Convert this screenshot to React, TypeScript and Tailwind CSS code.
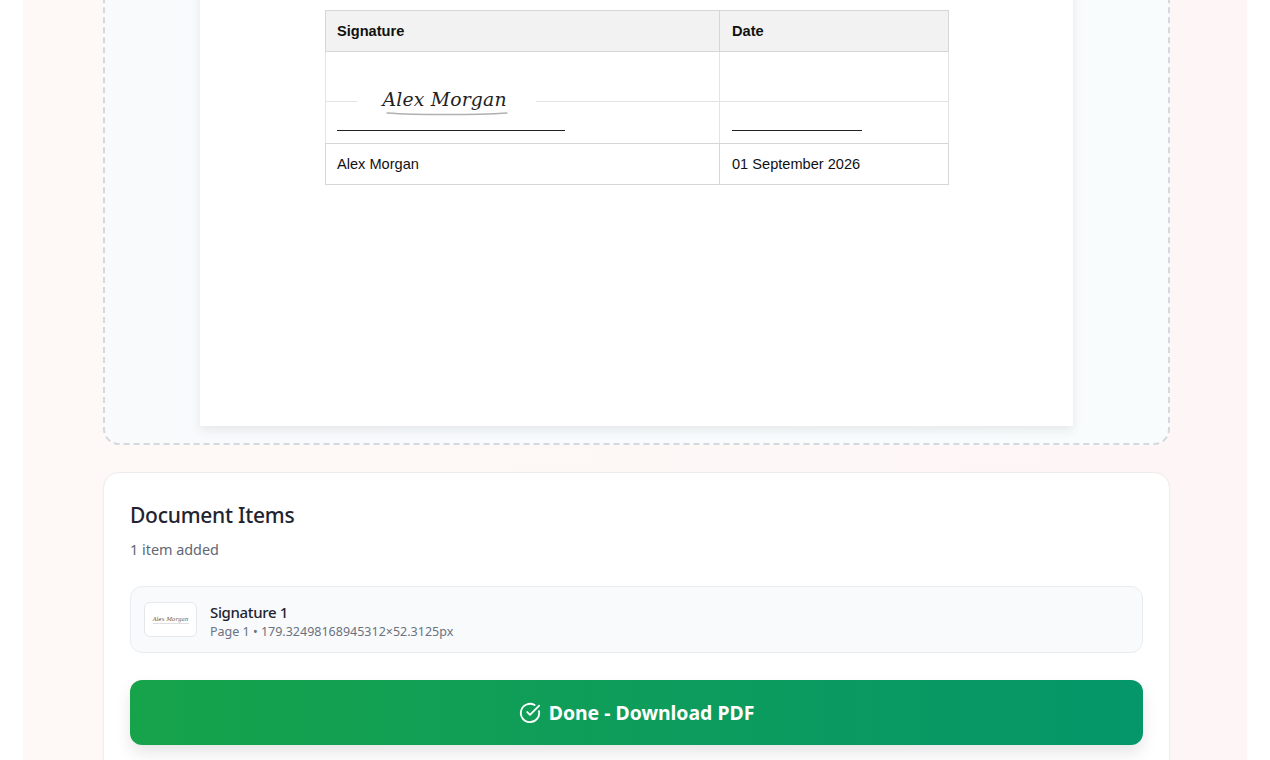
import React from 'react';

const ui = { fontFamily: '"Noto Sans", "Open Sans", sans-serif' };

const App = () => {
    return (
        <div className="h-[760px] overflow-hidden bg-white" style={ui}>
            <div className="mx-auto h-full w-[1224px] overflow-hidden bg-gradient-to-r from-[#fef9f6] via-[#fdf7f6] to-[#fef6f6] pr-[77px] pl-20">

                {/* Drop zone with the PDF page */}
                <div className="-mt-[40px] flex justify-center rounded-2xl border-2 border-dashed border-[#d5d8dd] bg-gradient-to-r from-[#f8fafc] to-[#f8fcfd] pt-[17px] pb-[17px]">
                    <div className="relative h-[447px] w-[873px] shrink-0 bg-white pt-[31px] pl-[125px] shadow-[0_4px_10px_rgba(0,0,0,0.08)]">
                        <table className="w-[624px] table-fixed border-collapse font-['Liberation_Sans',Arial,sans-serif] text-[14.6px] text-[#111]">
                            <tbody>
                                <tr className="h-[41px] bg-[#f2f2f2] font-bold">
                                    <td className="w-[394px] border border-[#d6d6d6] pt-[2px] pr-3 pl-[11px]">Signature</td>
                                    <td className="border border-[#d6d6d6] px-3 pt-[2px]">Date</td>
                                </tr>
                                <tr className="h-[50px]">
                                    <td className="border border-[#e3e3e3]"></td>
                                    <td className="border border-[#e3e3e3]"></td>
                                </tr>
                                <tr className="h-[42px]">
                                    <td className="border border-[#e3e3e3] border-b-[#d6d6d6] pr-3 pl-[11px] align-bottom">
                                        <div className="mb-3 h-px w-[228px] bg-[#222]"></div>
                                    </td>
                                    <td className="border border-[#e3e3e3] border-b-[#d6d6d6] px-3 align-bottom">
                                        <div className="mb-3 h-px w-[130px] bg-[#222]"></div>
                                    </td>
                                </tr>
                                <tr className="h-[41px]">
                                    <td className="border border-[#d6d6d6] pt-px pr-3 pl-[11px]">Alex Morgan</td>
                                    <td className="border border-[#d6d6d6] px-3 pt-px">01 September 2026</td>
                                </tr>
                            </tbody>
                        </table>

                        {/* Placed signature */}
                        <div className="absolute top-[96px] left-[157px] h-[52px] w-[179px] bg-white">
                            <div className="absolute top-[13px] left-[25.5px] font-['DejaVu_Serif',serif] text-[18.8px] leading-6 tracking-[0.2px] whitespace-nowrap text-[#222] italic">
                                Alex Morgan
                            </div>
                            <svg className="absolute top-[37px] left-[29px]" width="122" height="4" viewBox="0 0 122 4" fill="none">
                                <path d="M1 1C30 3 90 3 121 1" stroke="#b0b0b0" strokeWidth="1.3" strokeLinecap="round" />
                            </svg>
                        </div>
                    </div>
                </div>

                {/* Document items */}
                <div className="mt-[27px] rounded-2xl border border-[#f0ecec] bg-white px-[26px] pt-[26px] pb-8 shadow-[0_1px_3px_rgba(0,0,0,0.03)]">
                    <h2 className="text-[21px] leading-[32px] font-medium tracking-[-0.25px] text-[#1f2430]">Document Items</h2>
                    <p className="mt-[9px] text-[14.4px] leading-5 text-[#5f6672]">1 item added</p>

                    <div className="mt-[26px] flex h-[67px] items-center gap-[13px] rounded-xl border border-[#e9edf1] bg-[#f8fafc] px-[13px]">
                        <div className="flex h-[35px] w-[53px] flex-col items-center justify-center rounded-md border border-[#e5e7eb] bg-white">
                            <span className="font-['DejaVu_Serif',serif] text-[5.5px] leading-[7px] whitespace-nowrap text-[#555] italic">Alex Morgan</span>
                            <div className="h-px w-9 bg-[#e0e0e0]"></div>
                        </div>
                        <div className="pt-[2px]">
                            <p className="text-[15px] leading-5 font-medium tracking-[-0.35px] text-[#1f2430]">Signature 1</p>
                            <p className="mt-[2px] text-[12.5px] leading-4 text-[#6b7280]">Page 1 • 179.32498168945312×52.3125px</p>
                        </div>
                    </div>

                    <button className="mt-[27px] flex h-[65px] w-full items-center justify-center gap-2 rounded-xl bg-gradient-to-r from-[#16a34a] to-[#059669] text-[19.4px] font-bold text-white shadow-[0_8px_16px_rgba(0,0,0,0.1)]">
                        <svg width="22" height="22" viewBox="0 0 24 24" fill="none" stroke="currentColor" strokeWidth="2" strokeLinecap="round" strokeLinejoin="round">
                            <path d="M21.8 10A10 10 0 1 1 17 3.34" />
                            <path d="m9 11 3 3L22 4" />
                        </svg>
                        Done - Download PDF
                    </button>
                </div>
            </div>
        </div>
    );
};

export default App;
